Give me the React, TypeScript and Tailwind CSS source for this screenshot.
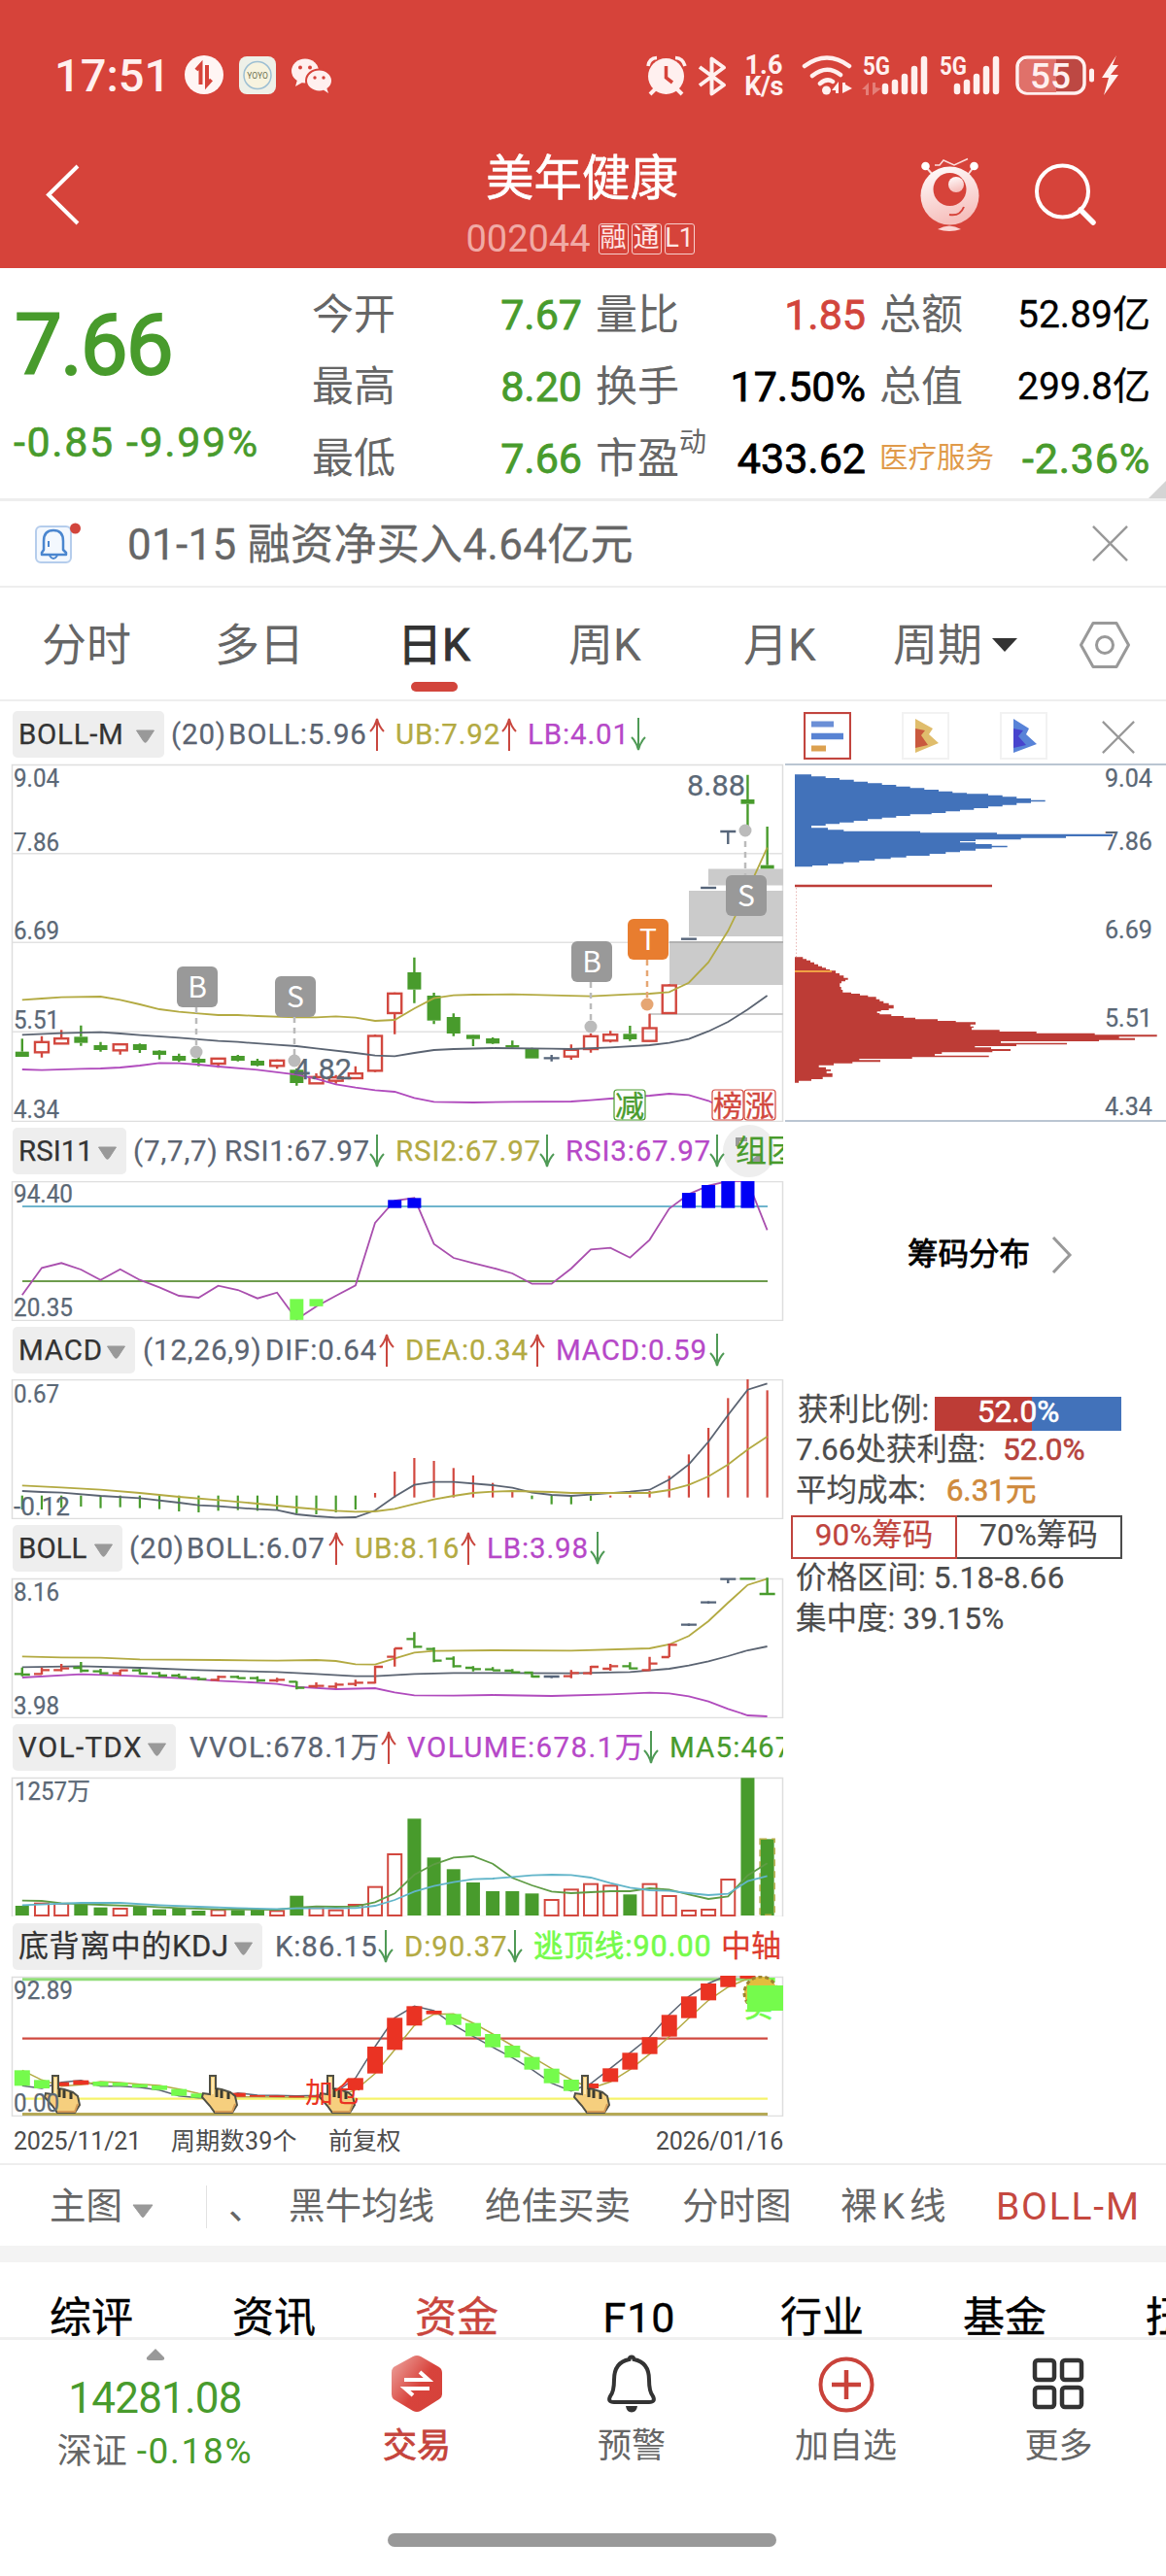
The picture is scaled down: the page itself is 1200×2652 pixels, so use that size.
import { clsx } from 'clsx';
import type { ReactNode } from 'react';

type Tone = 'g' | 'r' | 'k';
type Pt = [number, number];

const GREEN = '#489b2c';
const RED = '#d2483f';
const SLATE = '#5b6472';
const OLIVE = '#b3aa42';
const PURPLE = '#b04bbd';
const TONES: Record<Tone, string> = { g: GREEN, r: RED, k: '#56657a' };

// x of the n-th trading day
const dayX = (n: number) => 22.8 + n * 20.18;
// levels are stored in thirds of a pixel above a per-chart base
const level = (base: number) => (v: number) => base + v / 3;

const line = (pts: Pt[], y: (v: number) => number) =>
  pts.map(([n, v]) => `${dayX(n).toFixed(1)},${y(v).toFixed(1)}`).join(' ');

/* ---------- data ---------- */

const candles: [number, number, number, number, Tone][] = [
  [1048, 1088, 1104, 1104, 'g'], [1040, 1057, 1090, 1106, 'r'], [1021, 1046, 1063, 1063, 'r'],
  [1007, 1042, 1061, 1070, 'g'], [1058, 1068, 1083, 1088, 'g'], [1063, 1064, 1084, 1097, 'r'],
  [1063, 1065, 1083, 1092, 'g'], [1083, 1085, 1098, 1112, 'g'], [1094, 1101, 1116, 1120, 'g'],
  [1104, 1110, 1122, 1133, 'g'], [1107, 1108, 1125, 1138, 'r'], [1098, 1101, 1116, 1118, 'g'],
  [1110, 1116, 1131, 1133, 'g'], [1112, 1114, 1132, 1141, 'r'], [1140, 1144, 1185, 1193, 'g'],
  [1155, 1165, 1186, 1188, 'r'], [1160, 1166, 1178, 1187, 'r'], [1133, 1154, 1170, 1172, 'r'],
  [1035, 1038, 1147, 1151, 'r'], [905, 907, 969, 1034, 'r'], [797, 843, 896, 938, 'g'],
  [906, 915, 992, 1003, 'g'], [970, 981, 1032, 1040, 'g'], [1035, 1036, 1049, 1071, 'g'],
  [1044, 1047, 1063, 1065, 'g'], [1054, 1068, 1075, 1076, 'g'], [1076, 1077, 1109, 1109, 'g'],
  [1098, 1108, 1108, 1118, 'k'], [1066, 1081, 1103, 1113, 'r'], [1032, 1039, 1080, 1091, 'r'],
  [1024, 1034, 1054, 1060, 'r'], [1008, 1033, 1050, 1055, 'g'], [971, 1014, 1055, 1056, 'r'],
  [880, 882, 969, 970, 'r'], [740, 740, 740, 740, 'k'], [582, 582, 582, 582, 'k'],
  [408, 408, 408, 447, 'k'], [233, 309, 323, 410, 'g'], [393, 512, 523, 523, 'g'],
];

const mainUpper: Pt[] = [[0, 928], [1, 924], [2, 920], [4, 918], [5, 928], [6, 942], [7, 957], [8, 965], [9, 970], [10, 975], [11, 975], [12, 978], [14, 982], [15, 982], [16, 979], [17, 983], [18, 993], [19, 990], [20, 955], [21, 923], [22, 914], [23, 912], [25, 911], [27, 914], [29, 917], [31, 911], [32, 909], [33, 904], [34, 875], [35, 812], [36, 715], [37, 590], [38, 458]];
const mainMid: Pt[] = [[0, 1036], [2, 1031], [4, 1028], [5, 1032], [6, 1037], [8, 1045], [10, 1055], [11, 1058], [13, 1067], [14, 1071], [15, 1078], [17, 1092], [18, 1100], [19, 1102], [20, 1092], [21, 1083], [22, 1080], [24, 1077], [27, 1079], [28, 1080], [30, 1075], [32, 1068], [33, 1061], [34, 1049], [35, 1025], [36, 996], [37, 958], [38, 915]];
const mainLower: Pt[] = [[0, 1143], [1, 1145], [3, 1141], [4, 1140], [5, 1137], [6, 1131], [7, 1123], [8, 1124], [9, 1128], [10, 1134], [12, 1144], [14, 1159], [15, 1172], [16, 1189], [17, 1199], [18, 1207], [19, 1212], [20, 1231], [21, 1243], [23, 1245], [25, 1243], [28, 1242], [29, 1238], [30, 1233], [32, 1224], [33, 1218], [34, 1222], [35, 1240], [35.4, 1252]];

const rsi: Pt[] = [[0, 550], [1, 466], [2, 451], [3, 471], [4, 503], [5, 470], [6, 503], [7, 526], [8, 552], [9, 558], [10, 521], [11, 534], [12, 560], [13, 542], [14, 625], [15, 585], [16, 552], [17, 520], [18, 327], [19, 258], [20, 250], [21, 392], [22, 435], [23, 451], [24, 466], [25, 483], [26, 515], [27, 515], [28, 468], [29, 409], [30, 404], [31, 434], [32, 379], [33, 283], [34, 238], [35, 212], [36, 198], [37, 198], [38, 349]];
const rsiHot: Pt[] = [[19, 256], [20, 250], [34, 234], [35, 210], [36, 195], [37, 195]];

const dif: Pt[] = [[0, 1155], [1, 1158], [2, 1160], [4, 1170], [6, 1177], [8, 1191], [9, 1199], [10, 1202], [12, 1211], [13, 1214], [14, 1227], [15, 1233], [16, 1237], [17, 1236], [18, 1215], [19, 1172], [20, 1136], [21, 1127], [22, 1127], [24, 1137], [25, 1145], [26, 1160], [27, 1167], [28, 1170], [29, 1166], [31, 1157], [32, 1151], [33, 1120], [34, 1073], [35, 1003], [36, 920], [37, 842], [38, 823]];
const dea: Pt[] = [[0, 1138], [2, 1144], [4, 1151], [6, 1161], [8, 1173], [10, 1183], [12, 1194], [14, 1206], [16, 1216], [17, 1219], [18, 1218], [19, 1210], [20, 1195], [21, 1181], [22, 1170], [23, 1161], [24, 1157], [25, 1155], [27, 1158], [28, 1161], [30, 1161], [32, 1161], [33, 1152], [34, 1136], [35, 1110], [36, 1073], [37, 1027], [38, 987]];
const macdBars = [1212, 1212, 1207, 1203, 1208, 1205, 1208, 1211, 1218, 1221, 1216, 1214, 1216, 1212, 1224, 1227, 1221, 1212, 1161, 1095, 1053, 1062, 1084, 1107, 1130, 1152, 1180, 1196, 1196, 1185, 1169, 1168, 1155, 1108, 1042, 960, 868, 808, 844];

const bollUpper: Pt[] = [[0, 436], [2, 439], [4, 440], [6, 445], [10, 447], [13, 449], [15, 447], [16, 450], [17, 460], [18, 461], [19, 442], [20, 424], [21, 419], [24, 417], [28, 418], [32, 411], [33, 399], [34, 373], [35, 327], [36, 270], [37, 215], [38, 196]];
const bollMid: Pt[] = [[0, 469], [3, 466], [6, 471], [9, 478], [13, 484], [15, 490], [17, 497], [18, 497], [20, 490], [22, 487], [28, 488], [31, 484], [33, 474], [34, 464], [35, 451], [36, 435], [37, 417], [38, 405]];
const bollLower: Pt[] = [[0, 501], [3, 491], [6, 497], [8, 503], [10, 511], [12, 517], [13, 521], [14, 530], [16, 537], [18, 534], [19, 547], [20, 556], [22, 557], [24, 555], [27, 558], [30, 553], [32, 548], [33, 550], [34, 559], [35, 575], [36, 598], [37, 618], [38, 621]];
const ohlc: [number, number, number, number, Tone][] = [
  [470, 497, 490, 492, 'g'], [470, 492, 490, 478, 'r'], [459, 482, 478, 473, 'r'], [453, 485, 471, 480, 'g'],
  [474, 492, 482, 488, 'g'], [477, 495, 488, 479, 'r'], [474, 491, 479, 489, 'g'], [484, 500, 488, 495, 'g'],
  [489, 502, 495, 500, 'g'], [498, 510, 502, 506, 'g'], [495, 513, 508, 499, 'r'], [495, 505, 499, 503, 'g'],
  [497, 515, 503, 510, 'g'], [502, 515, 510, 508, 'r'], [512, 538, 514, 533, 'g'], [516, 533, 528, 527, 'r'],
  [517, 535, 529, 523, 'r'], [508, 528, 521, 517, 'r'], [465, 520, 517, 468, 'r'], [410, 467, 437, 411, 'r'],
  [361, 410, 382, 406, 'g'], [408, 454, 413, 449, 'g'], [436, 470, 443, 466, 'g'], [466, 482, 471, 475, 'g'],
  [469, 480, 476, 479, 'g'], [475, 488, 480, 485, 'g'], [482, 501, 486, 498, 'g'], [494, 503, 498, 498, 'k'],
  [478, 503, 497, 487, 'r'], [465, 493, 488, 468, 'r'], [459, 480, 474, 466, 'r'], [454, 476, 466, 473, 'g'],
  [437, 481, 478, 458, 'r'], [396, 438, 438, 400, 'r'], [334, 342, 338, 338, 'k'], [265, 273, 269, 269, 'k'],
  [194, 210, 197, 197, 'k'], [194, 198, 196, 196, 'g'], [193, 247, 243, 243, 'g'],
];

const volume: [number, Tone][] = [
  [1206, 'g'], [1199, 'r'], [1200, 'r'], [1199, 'g'], [1211, 'g'], [1215, 'r'], [1207, 'g'], [1217, 'g'], [1214, 'g'],
  [1221, 'g'], [1219, 'r'], [1219, 'g'], [1218, 'g'], [1222, 'r'], [1175, 'g'], [1213, 'r'], [1220, 'r'], [1203, 'r'],
  [1148, 'r'], [1047, 'r'], [937, 'g'], [1057, 'g'], [1093, 'g'], [1134, 'g'], [1161, 'g'], [1161, 'g'], [1168, 'g'],
  [1188, 'r'], [1156, 'r'], [1139, 'r'], [1144, 'r'], [1171, 'g'], [1139, 'r'], [1176, 'r'], [1221, 'r'], [1218, 'r'],
  [1125, 'r'], [811, 'g'], [1000, 'g'],
];
const ma5: Pt[] = [[0, 1190], [1, 1191], [2, 1198], [4, 1203], [6, 1207], [8, 1213], [10, 1217], [13, 1218], [14, 1212], [15, 1208], [16, 1209], [17, 1208], [18, 1195], [19, 1168], [20, 1110], [21, 1078], [22, 1057], [23, 1053], [24, 1076], [25, 1120], [26, 1143], [27, 1162], [28, 1167], [29, 1164], [30, 1161], [31, 1161], [32, 1152], [33, 1156], [34, 1171], [35, 1185], [36, 1177], [37, 1112], [38, 1075]];
const ma10: Pt[] = [[0, 1204], [3, 1197], [5, 1197], [7, 1204], [9, 1209], [11, 1213], [13, 1216], [14, 1214], [17, 1213], [18, 1206], [19, 1188], [20, 1162], [21, 1145], [22, 1133], [23, 1124], [24, 1122], [25, 1117], [26, 1112], [27, 1110], [28, 1111], [29, 1119], [30, 1136], [31, 1150], [32, 1158], [33, 1160], [34, 1167], [35, 1173], [36, 1169], [37, 1130], [38, 1114]];

const kdj: [number, number, number, 'r' | 'g'][] = [
  [0, 484, 532, 'g'], [1, 514, 540, 'g'], [2, 521, 533, 'r'], [3, 515, 529, 'r'], [4, 519, 533, 'g'], [5, 522, 533, 'g'],
  [6, 527, 537, 'g'], [7, 531, 545, 'g'], [8, 542, 563, 'g'], [9, 556, 569, 'g'], [10, 562, 570, 'g'], [11, 554, 566, 'r'],
  [12, 561, 566, 'r'], [13, 562, 567, 'r'], [14, 563, 568, 'r'], [15, 562, 567, 'r'], [16, 552, 566, 'r'], [17, 508, 545, 'r'],
  [18, 411, 494, 'r'], [19, 322, 421, 'r'], [20, 286, 346, 'r'], [21, 300, 311, 'r'], [22, 310, 344, 'g'], [23, 338, 379, 'g'],
  [24, 372, 413, 'g'], [25, 408, 445, 'g'], [26, 443, 482, 'g'], [27, 479, 524, 'g'], [28, 513, 548, 'g'], [29, 525, 540, 'r'],
  [30, 478, 520, 'r'], [31, 430, 482, 'r'], [32, 382, 434, 'r'], [33, 313, 380, 'r'], [34, 256, 323, 'r'], [35, 216, 268, 'r'],
  [36, 190, 227, 'r'], [37, 191, 201, 'r'], [38, 198, 212, 'g'],
];

// chip histogram: [reach, lower edge]
const chipsHigh: Pt[] = [[135, 238], [179, 243], [222, 248], [266, 254], [309, 259], [353, 264], [397, 269], [440, 274], [484, 279], [528, 284], [571, 289], [615, 292], [681, 296], [725, 301], [769, 306], [813, 311], [857, 316], [813, 320], [769, 326], [725, 331], [681, 336], [637, 341], [594, 346], [550, 351], [506, 355], [440, 360], [397, 365], [353, 370], [309, 375], [266, 380], [222, 385], [179, 390], [135, 397], [186, 403], [235, 407], [471, 412], [708, 416], [1065, 423], [921, 428], [782, 433], [642, 438], [594, 442], [642, 447], [692, 452], [740, 457], [692, 461], [642, 467], [594, 472], [550, 477], [500, 483], [428, 488], [380, 493], [331, 498], [283, 503], [235, 508], [186, 513], [138, 517]];
const chipsLow: Pt[] = [[109, 802], [120, 806], [132, 812], [144, 818], [156, 824], [168, 829], [180, 834], [192, 838], [210, 846], [222, 853], [235, 860], [248, 866], [240, 871], [228, 877], [223, 888], [227, 897], [232, 905], [258, 909], [285, 914], [310, 919], [335, 926], [346, 932], [358, 938], [374, 944], [389, 955], [374, 960], [350, 964], [338, 969], [346, 973], [382, 978], [420, 983], [456, 988], [525, 993], [581, 997], [642, 1004], [626, 1010], [636, 1014], [630, 1021], [716, 1026], [830, 1031], [1010, 1036], [1202, 1042], [1085, 1046], [1134, 1052], [1023, 1056], [720, 1061], [924, 1066], [768, 1071], [640, 1075], [690, 1080], [750, 1086], [694, 1090], [538, 1095], [516, 1100], [683, 1105], [446, 1110], [283, 1114], [348, 1120], [262, 1124], [204, 1130], [158, 1136], [180, 1143], [195, 1148], [182, 1155], [200, 1166], [170, 1173], [135, 1178], [96, 1184]];

const stepPath = (start: number, rows: Pt[]) =>
  `M818 ${720 + start / 3}` +
  rows.map(([x, y]) => `H${(790 + x / 3).toFixed(1)}V${(720 + y / 3).toFixed(1)}`).join('') +
  'H818Z';

/* ---------- small pieces ---------- */

function Arrow({ dir }: { dir: 'up' | 'down' }) {
  return (
    <svg className="mr-[11px] h-9 w-4 shrink-0" viewBox="0 0 16 36" fill="none" strokeWidth="2">
      {dir === 'up' ? (
        <path d="M8 35V2M1 15Q6 10 8 2Q10 10 15 15" stroke="#c9473f" />
      ) : (
        <path d="M8 1V34M1 21Q6 26 8 34Q10 26 15 21" stroke="#4f9a56" />
      )}
    </svg>
  );
}

interface Segment {
  text: string;
  className: string;
  dir?: 'up' | 'down';
}

function PanelHead({ name, chip, segments, className, children }: {
  name: string;
  chip: string;
  segments: Segment[];
  className: string;
  children?: ReactNode;
}) {
  return (
    <div className={clsx('relative w-[806px] overflow-hidden pl-[13px]', className)}>
      <div className="flex h-12 items-center text-[29.5px] whitespace-nowrap [-webkit-text-stroke:0.25px]">
        <div className={clsx('flex h-12 shrink-0 items-center rounded-[5px] bg-[#eeeeee] pl-[6px] text-[#333]', chip)}>
          <span>{name}</span>
          <svg className="mt-1 ml-auto mr-[9px] h-[14px] w-[21px] shrink-0" viewBox="0 0 21 14">
            <path d="M1.500 1H19.500L12 12.500Q10.500 14 9 12.500Z" fill="#999" stroke="#999" strokeLinejoin="round" />
          </svg>
        </div>
        {children}
        {segments.map((s) => (
          <div key={s.text} className="relative flex shrink-0 items-center">
            <span className={clsx('shrink-0', s.className)}>{s.text}</span>
            {s.dir && <Arrow dir={s.dir} />}
          </div>
        ))}
      </div>
    </div>
  );
}

function Frame({ top, height = 144 }: { top: number; height?: number }) {
  return <rect x="12.5" y={top + 0.5} width="793" height={height} fill="none" stroke="#dedede" strokeWidth="1.5" />;
}

function AxisLabel({ x = 14, y, w = 47, size = 25, children }: { x?: number; y: number; w?: number; size?: number; children: string }) {
  return (
    <text x={x} y={y} fontSize={size} fill="#5b6876" stroke="#5b6876" strokeWidth="0.25" textLength={w} lengthAdjust="spacingAndGlyphs">
      {children}
    </text>
  );
}

function Flag({ x, y, dot, letter, color = '#999999', dotColor = '#bbbbbb', up }: {
  x: number; y: number; dot: number; letter: string; color?: string; dotColor?: string; up?: boolean;
}) {
  return (
    <g>
      <path d={up ? `M${x} ${dot}V${y}` : `M${x} ${y + 42}V${dot}`} stroke={dotColor} strokeWidth="2.5" strokeDasharray="6 5" />
      <circle cx={x} cy={dot} r="6.5" fill={dotColor} />
      <rect x={x - 20} y={y} width="42" height="42" rx="6" fill={color} />
      <text x={x + 1} y={y + 32} fontSize="30" fill="#fff" textAnchor="middle" className="font-['Noto_Sans_CJK_SC',sans-serif]">
        {letter}
      </text>
    </g>
  );
}

function Stamp({ x, color, children }: { x: number; color: string; children: string }) {
  return (
    <g>
      <rect x={x} y="1122" width="32" height="31" rx="3" fill="#fff" stroke={color} strokeWidth="1.2" />
      <text x={x + 16} y="1148.5" fontSize="30" fill={color} stroke={color} strokeWidth="0.4" textAnchor="middle">
        {children}
      </text>
    </g>
  );
}

function Hand({ x }: { x: number }) {
  return (
    <g transform={`translate(${x} 2136)`}>
      <path d="M8 1H14V14L20 15L29 18L34 22L36 31L31 39H13L8 32L0 23L1 19L8 20Z" fill="#f6cf7e" stroke="#4f4f45" strokeWidth="2" />
      <path d="M15 14V23M20 16V24M27 18V25" stroke="#3b3b30" strokeWidth="3" />
      <path d="M11 3V20" stroke="#ffe9b0" strokeWidth="2" />
      <path d="M13 38L31 38L34 30" stroke="#d49a55" strokeWidth="2" fill="none" />
    </g>
  );
}

/* ---------- header ---------- */

function StatusBar() {
  return (
    <div className="flex h-[114px] items-start pt-[56px] text-[#fff0ef]">
      <div className="ml-[56px] h-[42px] w-[133px] text-[47px] leading-[43px] font-medium">17:51</div>
      <svg className="h-[42px] w-[156px]" viewBox="189 56 156 42">
        <circle cx="210" cy="77" r="20" fill="#fff5f4" />
        <path d="M206.500 87V67L202 72M213 67V87L217.500 82" fill="none" stroke="#d6433a" strokeWidth="4" />
        <rect x="246" y="58" width="38" height="39" rx="8" fill="#eef0e8" />
        <circle cx="265" cy="77.5" r="14" fill="#f7f3df" stroke="#9dbfd3" strokeWidth="1.5" />
        <text x="265" y="81" fontSize="8.5" textAnchor="middle" fill="#6d7050">YOYO</text>
        <ellipse cx="314" cy="73" rx="14" ry="12.5" fill="#fff0ef" />
        <path d="M306 82L304 89L311 85Z" fill="#fff0ef" />
        <ellipse cx="328.5" cy="83" rx="13.5" ry="11.5" fill="#fff0ef" stroke="#d6433a" strokeWidth="2" />
        <path d="M332 92L338 96L336 90Z" fill="#fff0ef" />
        <g fill="#d6433a">
          <circle cx="309" cy="69.5" r="2" />
          <circle cx="319" cy="69.5" r="2" />
          <circle cx="324" cy="80" r="1.7" />
          <circle cx="333" cy="80" r="1.7" />
        </g>
      </svg>
      <svg className="ml-[315px] h-[44px] w-[90px]" viewBox="660 55 90 44" fill="none" stroke="#fff0ef">
        <circle cx="685.5" cy="77.5" r="18.5" fill="#fff0ef" stroke="none" />
        <path d="M685.500 67V79L692 84" stroke="#d6433a" strokeWidth="3.5" />
        <path d="M667 67Q668 59 676 58.500M705 67Q703 59 695 58.500" strokeWidth="3.5" />
        <path d="M674 91L669 96M697 91L702 96" strokeWidth="4" />
        <path d="M720 68L745 86.500L732.500 95.500V59.500L745 68.500L720 87" strokeWidth="4" strokeLinejoin="round" />
      </svg>
      <div className="ml-[14px] w-[44px] text-center text-[27px] leading-[22px] font-bold">
        <div>1.6</div>
        <div className="tracking-[-0.5px]">K/s</div>
      </div>
      <svg className="ml-[12px] h-[44px] w-[336px]" viewBox="820 55 336 44" fill="none" stroke="#fff0ef" strokeLinecap="round">
        <path d="M828 67Q851 50 874 67M836 77Q851 65 865 76M844 85Q851 79 857 83" strokeWidth="4.5" />
        <circle cx="850.5" cy="92" r="4.5" fill="#fff0ef" stroke="none" />
        <path d="M856 92L863 83V95H860V92ZM867 84V95L877 90L870 86V84Z" fill="#fff0ef" stroke="none" />
        <g opacity=".35" fill="#fff0ef" stroke="none">
          <path d="M887 91L894 84V97H891V91ZM898 84V97L907 90L901 89V84Z" />
        </g>
        <path d="M911 93V88M921 93V84M931 93V78M941 93V70M951 93V60" strokeWidth="6.5" />
        <path d="M985 93V88M995 93V84M1005 93V78M1015 93V70M1025 93V60" strokeWidth="6.5" />
        <g fill="#fff0ef" stroke="none" fontSize="26" fontWeight="700">
          <text x="888" y="76" textLength="28" lengthAdjust="spacingAndGlyphs">5G</text>
          <text x="967" y="76" textLength="28" lengthAdjust="spacingAndGlyphs">5G</text>
        </g>
        <rect x="1047" y="58" width="69" height="37" rx="10" fill="#bd4843" strokeWidth="3.5" />
        <path d="M1057 60H1087V94H1057Q1049 93 1049 85V68Q1049 61 1057 60Z" fill="#e0716a" stroke="none" />
        <path d="M1123.500 72V81" strokeWidth="5" />
        <path d="M1149 56L1134 79H1141L1136 97L1151 76H1143L1151 66H1145Z" fill="#fff0ef" stroke="none" />
        <text x="1081" y="90" fontSize="37" fontWeight="500" textAnchor="middle" fill="#fff0ef" stroke="none">55</text>
      </svg>
    </div>
  );
}

function TitleBar() {
  return (
    <div className="flex h-[162px] text-white">
      <svg className="mt-[52px] ml-[44px] h-[68px] w-[40px]" viewBox="44 166 40 68" fill="none" stroke="#fff" strokeWidth="4">
        <path d="M80 171L50 200.500L80 230" />
      </svg>
      <div className="ml-[385px] w-[260px] pt-[39px] text-center">
        <div className="text-[49.5px] leading-[62px] [-webkit-text-stroke:0.6px]">美年健康</div>
        <div className="mt-[12px] flex h-[37px] items-center justify-center gap-[3px] text-[27px] leading-none text-[#ffe5e3]">
          <span className="mr-[5px] -ml-1 text-[38px] text-[#f0aaa5]">002044</span>
          {['融', '通', 'L1'].map((tag) => (
            <span key={tag} className="flex h-[32px] w-[31px] items-center justify-center rounded-[3px] border border-[#f7cfcc]">
              {tag}
            </span>
          ))}
        </div>
      </div>
      <svg className="mt-[46px] ml-[211px] h-[80px] w-[200px]" viewBox="940 160 200 80" fill="none">
        <defs>
          <linearGradient id="bot" x1="0" y1="0" x2=".3" y2="1">
            <stop offset="0" stopColor="#fff" />
            <stop offset="1" stopColor="#f6c0bd" />
          </linearGradient>
        </defs>
        <path d="M953 172L960 180M1002 172L996 180" stroke="#fbdedc" strokeWidth="2" />
        <circle cx="952.5" cy="171" r="4.3" fill="#fff" />
        <circle cx="1002.5" cy="171" r="4.3" fill="#fff" />
        <path d="M962 170H967L971 165L982 170L996 163.500" stroke="#fbdedc" strokeWidth="1.5" />
        <circle cx="977.5" cy="201.5" r="30" fill="url(#bot)" />
        <circle cx="977.5" cy="195" r="17" fill="#d6433a" />
        <circle cx="984" cy="190" r="8" fill="url(#bot)" />
        <path d="M977 221Q988 223 992 213" stroke="#d6433a" strokeWidth="2" />
        <path d="M965 236Q977 229 989 236Q977 240 965 236Z" fill="#fbd5d3" />
        <circle cx="1093.5" cy="197" r="26.5" stroke="#fff" strokeWidth="4" />
        <path d="M1112 216L1125 229" stroke="#fff" strokeWidth="5.5" strokeLinecap="round" />
      </svg>
    </div>
  );
}

function Quote() {
  const label = 'text-[43px] text-[#666]';
  return (
    <div className="relative flex h-[240px] border-b-[3px] border-[#eeeeee]">
      <div className="w-[321px] pl-[15px] text-[#489b2c]">
        <div className="mt-[32px] text-[87px] leading-[94px] tracking-[-2px] [-webkit-text-stroke:2px]">7.66</div>
        <div className="mt-[27px] -ml-px text-[43px] leading-[52px] tracking-[1.6px] [-webkit-text-stroke:0.6px]">-0.85 -9.99%</div>
      </div>
      <div className="grid h-[223px] grid-cols-[102px_176px_112px_180px_126px_167px] grid-rows-[74px_74px_74px] items-center pt-[11px] text-right text-[43px] leading-none whitespace-nowrap text-black [-webkit-text-stroke:0.8px] [&>*:nth-child(odd)]:text-left [&>*:nth-child(odd)]:[-webkit-text-stroke:0]">
        <span className={label}>今开</span>
        <span className="text-[#489b2c]">7.67</span>
        <span className={clsx(label, 'pl-[14px]')}>量比</span>
        <span className="text-[#d2453c]">1.85</span>
        <span className={clsx(label, 'pl-[14px]')}>总额</span>
        <span className="text-[39px] [-webkit-text-stroke:0.3px]">52.89亿</span>
        <span className={label}>最高</span>
        <span className="text-[#489b2c]">8.20</span>
        <span className={clsx(label, 'pl-[14px]')}>换手</span>
        <span>17.50%</span>
        <span className={clsx(label, 'pl-[14px]')}>总值</span>
        <span className="text-[39px] [-webkit-text-stroke:0.3px]">299.8亿</span>
        <span className={label}>最低</span>
        <span className="text-[#489b2c]">7.66</span>
        <span className={clsx(label, 'relative pl-[14px]')}>
          市盈<sup className="absolute top-[-9px] text-[28px] leading-none">动</sup>
        </span>
        <span>433.62</span>
        <span className="pl-[14px] text-[29.5px] text-[#e09a4a]">医疗服务</span>
        <span className="tracking-[0.8px] text-[#489b2c]">-2.36%</span>
      </div>
      <svg className="absolute right-0 bottom-0 h-[18px] w-[18px]" viewBox="0 0 18 18">
        <path d="M18 0V18H0Z" fill="#d4d4d4" />
      </svg>
    </div>
  );
}

function Cross({ className }: { className: string }) {
  return (
    <svg className={className} viewBox="0 0 38 38" stroke="#999" strokeWidth="2.5">
      <path d="M1 1L37 37M37 1L1 37" />
    </svg>
  );
}

function Notice() {
  return (
    <div className="flex h-[89px] items-center border-b-2 border-[#eeeeee]">
      <svg className="ml-[34px] h-[48px] w-[50px]" viewBox="34 535 50 48" fill="none">
        <rect x="37" y="541" width="36" height="37" rx="5" fill="#f3f8fe" stroke="#b5cdec" strokeWidth="2" />
        <path d="M43 570V568L45 565V556Q45 545 55 545Q65 545 65 556V565L68 568V570Z" stroke="#4a86cf" strokeWidth="2.5" strokeLinejoin="round" />
        <path d="M51 571Q55 577 59 571M50 556V562" stroke="#4a86cf" strokeWidth="2" />
        <circle cx="77.5" cy="543" r="5.5" fill="#d2453c" />
      </svg>
      <div className="mt-[3px] ml-[47px] flex-1 text-[44px] leading-none tracking-[0.3px] text-[#666] [-webkit-text-stroke:0.3px]">
        01-15 融资净买入4.64亿元
      </div>
      <Cross className="mr-[39px] h-[37px] w-[37px]" />
    </div>
  );
}

const periods = [
  { name: '分时', w: 'w-[178px]' },
  { name: '多日', w: 'w-[188px]' },
  { name: '日K', w: 'w-[176px]', active: true },
  { name: '周K', w: 'w-[180px]' },
  { name: '月K', w: 'w-[154px]' },
];

function PeriodTabs() {
  return (
    <div className="flex h-[117px] items-center border-b-2 border-[#eeeeee] pt-[3px] pl-[43px] text-[46px] leading-none text-[#666]">
      {periods.map((p) => (
        <div key={p.name} className={clsx('relative', p.w, p.active && 'text-[#333] [-webkit-text-stroke:1px]')}>
          {p.name}
          {p.active && <i className="absolute top-[61px] left-[14px] h-[10px] w-[48px] rounded-full bg-[#d2453c]" />}
        </div>
      ))}
      <div className="flex w-[191px] items-center">
        周期
        <svg className="ml-[10px] h-[15px] w-[26px]" viewBox="0 0 26 15">
          <path d="M0 0H26L13 14Z" fill="#333" />
        </svg>
      </div>
      <svg className="h-[50px] w-[54px]" viewBox="0 0 54 50" fill="none" stroke="#999" strokeWidth="3">
        <path d="M15 2.500H39L51.500 25L39 47.500H15L2.500 25Z" strokeLinejoin="round" />
        <circle cx="27" cy="25" r="8.5" />
      </svg>
    </div>
  );
}

/* ---------- charts ---------- */

function MainChart() {
  const y = level(720);
  return (
    <svg className="block h-[369px] w-[808px]" viewBox="0 786 808 369" fill="none">
      <Frame top={787} height={367} />
      <path d="M13 878.700H806M13 970.300H806M13 1062.300H806" stroke="#e2e2e2" strokeWidth="1.5" />
      <path d="M668 1044H806" stroke="#cccccc" strokeWidth="2" />
      <g fill="#cbcbcb">
        <rect x="729" y="894.5" width="77" height="17" />
        <rect x="709" y="917" width="97" height="47" />
        <rect x="689" y="969" width="117" height="45" />
      </g>
      <path d="M689 970H806" stroke="#a9a9a9" strokeWidth="1.5" />
      {candles.map(([hi, top, bottom, lo, tone], i) => {
        const x = dayX(i);
        const c = TONES[tone];
        if (tone === 'k') {
          return <path key={i} d={`M${x - 8} ${y(top)}H${x + 8}M${x} ${y(hi)}V${y(lo)}`} stroke={c} strokeWidth="2.4" />;
        }
        return (
          <g key={i} stroke={c} strokeWidth="2.4">
            <path d={`M${x} ${y(hi)}V${y(top)}M${x} ${y(bottom)}V${y(lo)}`} />
            {tone === 'g' ? (
              <rect x={x - 7} y={y(top)} width="14" height={y(bottom) - y(top)} fill={c} stroke="none" />
            ) : (
              <rect x={x - 7} y={y(top) + 0.5} width="14" height={y(bottom) - y(top) - 0.5} />
            )}
          </g>
        );
      })}
      <polyline points={line(mainMid, y)} stroke={SLATE} strokeWidth="1.8" />
      <polyline points={line(mainUpper, y)} stroke={OLIVE} strokeWidth="1.8" />
      <polyline points={line(mainLower, y)} stroke={PURPLE} strokeWidth="1.8" />
      <Flag x={202} y={995} dot={1083} letter="B" />
      <Flag x={303} y={1005} dot={1092} letter="S" />
      <Flag x={608} y={969} dot={1057} letter="B" />
      <Flag x={666} y={946} dot={1034} letter="T" color="#e87d2f" dotColor="#e6a673" />
      <Flag x={767} y={901} dot={855} letter="S" up />
      <Stamp x={632} color={GREEN}>减</Stamp>
      <Stamp x={733} color={RED}>榜</Stamp>
      <Stamp x={766} color={RED}>涨</Stamp>
      <AxisLabel y={810}>9.04</AxisLabel>
      <AxisLabel y={876}>7.86</AxisLabel>
      <AxisLabel y={967}>6.69</AxisLabel>
      <AxisLabel y={1059}>5.51</AxisLabel>
      <AxisLabel y={1151}>4.34</AxisLabel>
      <AxisLabel x={707} y={819} w={60} size={30}>8.88</AxisLabel>
      <AxisLabel x={302} y={1111} w={60} size={30}>4.82</AxisLabel>
    </svg>
  );
}

function RsiChart() {
  const y = level(1150);
  return (
    <svg className="block h-[144px] w-[808px]" viewBox="0 1216 808 144" fill="none">
      <Frame top={1216} height={143} />
      <path d="M23 1242H790" stroke="#6fb4cd" strokeWidth="1.8" />
      <path d="M23 1319H790" stroke="#6d9c4d" strokeWidth="1.8" />
      <polyline points={line(rsi, y)} stroke="#a94fae" strokeWidth="1.8" />
      {rsiHot.map(([n, v]) => (
        <rect key={n} x={dayX(n) - 7} y={y(v)} width="14" height={y(281) - y(v)} fill="#0000f5" />
      ))}
      <rect x={dayX(14) - 7} y={y(562)} width="14" height="21.5" fill="#75fb4c" />
      <rect x={dayX(15) - 7} y={y(562)} width="14" height="7.5" fill="#75fb4c" />
      <AxisLabel y={1238} w={61}>94.40</AxisLabel>
      <AxisLabel y={1355} w={61}>20.35</AxisLabel>
    </svg>
  );
}

function MacdChart() {
  const y = level(1150);
  return (
    <svg className="block h-[144px] w-[808px]" viewBox="0 1420 808 144" fill="none">
      <Frame top={1420} height={143} />
      {macdBars.map((v, i) => {
        const down = v > 1175;
        return (
          <path key={i} d={`M${dayX(i)} ${y(down ? 1169 : v)}V${y(down ? v : 1175)}`} stroke={down ? GREEN : RED} strokeWidth="2.2" />
        );
      })}
      <polyline points={line(dif, y)} stroke={SLATE} strokeWidth="1.8" />
      <polyline points={line(dea, y)} stroke={OLIVE} strokeWidth="1.8" />
      <AxisLabel y={1444}>0.67</AxisLabel>
      <AxisLabel y={1560} w={58}>-0.12</AxisLabel>
    </svg>
  );
}

function BollChart() {
  const y = level(1560);
  return (
    <svg className="block h-[145px] w-[808px]" viewBox="0 1624 808 145" fill="none">
      <Frame top={1625} height={143} />
      <polyline points={line(bollUpper, y)} stroke={OLIVE} strokeWidth="1.8" />
      <polyline points={line(bollMid, y)} stroke={SLATE} strokeWidth="1.8" />
      <polyline points={line(bollLower, y)} stroke={PURPLE} strokeWidth="1.8" />
      {ohlc.map(([hi, lo, open, close, tone], i) => (
        <path
          key={i}
          d={`M${dayX(i)} ${y(hi)}V${y(lo)}M${dayX(i) - 8} ${y(open)}H${dayX(i)}M${dayX(i)} ${y(close)}H${dayX(i) + 8}`}
          stroke={TONES[tone]}
          strokeWidth="2.4"
        />
      ))}
      <AxisLabel y={1648}>8.16</AxisLabel>
      <AxisLabel y={1765}>3.98</AxisLabel>
    </svg>
  );
}

function VolumeChart() {
  const y = level(1560);
  return (
    <svg className="block h-[144px] w-[808px]" viewBox="0 1829 808 144" fill="none">
      <Frame top={1830} height={143} />
      {volume.map(([v, tone], i) =>
        tone === 'g' ? (
          <rect key={i} x={dayX(i) - 7} y={y(v)} width="14" height={y(1236) - y(v)} fill={GREEN} />
        ) : (
          <rect key={i} x={dayX(i) - 7} y={y(v)} width="14" height={y(1236) - y(v)} stroke={RED} strokeWidth="2" />
        ),
      )}
      <rect x={dayX(38) - 7.5} y={y(1000)} width="15" height="78" stroke="#b3aa42" strokeWidth="1.5" strokeDasharray="7 5" />
      <polyline points={line(ma5, y)} stroke="#5f9c45" strokeWidth="1.8" />
      <polyline points={line(ma10, y)} stroke="#62b5c9" strokeWidth="1.8" />
      <AxisLabel x={15} y={1853} w={78}>1257万</AxisLabel>
    </svg>
  );
}

function KdjChart() {
  const y = level(1970);
  const fast: Pt[] = kdj.map(([n, a, b, c]) => [n, c === 'r' ? a : b]);
  const slow: Pt[] = kdj.map(([n, a, b, c]) => [n, c === 'r' ? b : a]);
  return (
    <svg className="block h-[145px] w-[808px]" viewBox="0 2034 808 145" fill="none">
      <Frame top={2035} height={143} />
      <path d="M23 2037.700H790" stroke="#90dd78" strokeWidth="3" />
      <path d="M23 2098.700H790" stroke="#d04a40" strokeWidth="2.2" />
      <path d="M23 2160.700H790" stroke="#f6f36b" strokeWidth="2.2" />
      <path d="M23 2176.500H790" stroke="#b5a957" strokeWidth="3" />
      <polyline points={line(fast, y)} stroke={SLATE} strokeWidth="1.5" />
      <polyline points={line(slow, y)} stroke={OLIVE} strokeWidth="1.5" />
      {kdj.map(([n, a, b, c]) => (
        <rect key={n} x={dayX(n) - 8} y={y(a)} width="16" height={y(b) - y(a)} fill={c === 'r' ? '#ea3323' : '#75fb4c'} />
      ))}
      {[46, 208, 329, 591].map((x) => <Hand key={x} x={x} />)}
      <text x="314" y="2165" fontSize="29" fill="#ea3323">加仓</text>
      <circle cx="783" cy="2052" r="17" fill="#e2bd3d" stroke="#9c8230" strokeWidth="3" strokeDasharray="4 3" />
      <text x="766" y="2077" fontSize="29" fill="#75fb4c" stroke="#75fb4c" strokeWidth="0.6">卖</text>
      <rect x="769" y="2044" width="37" height="26" fill="#75fb4c" />
      <AxisLabel y={2058} w={61}>92.89</AxisLabel>
      <AxisLabel y={2174}>0.00</AxisLabel>
    </svg>
  );
}

const grey = 'text-[#5b6472] tracking-[0.85px]';
const olive = 'text-[#b3aa42] tracking-[0.85px]';
const violet = 'text-[#b648c8] tracking-[0.85px]';

function Charts() {
  return (
    <div className="h-[1505px] w-[808px]">
      <PanelHead
        name="BOLL-M"
        chip="w-[156px] mr-[7px] tracking-[0.7px]"
        className="h-[64px] pt-[10px]"
        segments={[
          { text: '(20)', className: clsx(grey, 'w-[59px]') },
          { text: 'BOLL:5.96', className: clsx(grey, 'w-[145px]'), dir: 'up' },
          { text: 'UB:7.92', className: clsx(olive, 'w-[109px]'), dir: 'up' },
          { text: 'LB:4.01', className: clsx(violet, 'w-[106px]'), dir: 'down' },
        ]}
      />
      <MainChart />
      <PanelHead
        name="RSI11"
        chip="w-[117px] mr-[7px]"
        className="h-[61px] pt-[6px]"
        segments={[
          { text: '(7,7,7)', className: clsx(grey, 'w-[94px]') },
          { text: 'RSI1:67.97', className: clsx(grey, 'w-[149px]'), dir: 'down' },
          { text: 'RSI2:67.97', className: clsx(olive, 'w-[148px]'), dir: 'down' },
          { text: 'RSI3:67.97', className: clsx(violet, 'w-[148px]'), dir: 'down' },
          { text: '组团', className: 'text-[#489b2c] text-[32px]' },
        ]}
      >
        {/* floating drag handle, half hidden by the last value */}
        <svg className="absolute top-[3px] left-[744px] h-[54px] w-[54px]" viewBox="0 0 54 54">
          <circle cx="27" cy="27" r="27" fill="#eeeeee" />
          <path d="M15 22V15H25M30 38H38V32Z" fill="none" stroke="#999" strokeWidth="4" />
        </svg>
      </PanelHead>
      <RsiChart />
      <PanelHead
        name="MACD"
        chip="w-[126px] mr-[8px] tracking-[0.8px]"
        className="h-[60px] pt-[6px]"
        segments={[
          { text: '(12,26,9)', className: clsx(grey, 'w-[126px]') },
          { text: 'DIF:0.64', className: clsx(grey, 'w-[117px]'), dir: 'up' },
          { text: 'DEA:0.34', className: clsx(olive, 'w-[128px]'), dir: 'up' },
          { text: 'MACD:0.59', className: clsx(violet, 'w-[158px]'), dir: 'down' },
        ]}
      />
      <MacdChart />
      <PanelHead
        name="BOLL"
        chip="w-[113px] mr-[7px]"
        className="h-[60px] pt-[6px]"
        segments={[
          { text: '(20)', className: clsx(grey, 'w-[59px]') },
          { text: 'BOLL:6.07', className: clsx(grey, 'w-[146px]'), dir: 'up' },
          { text: 'UB:8.16', className: clsx(olive, 'w-[109px]'), dir: 'up' },
          { text: 'LB:3.98', className: clsx(violet, 'w-[106px]'), dir: 'down' },
        ]}
      />
      <BollChart />
      <PanelHead
        name="VOL-TDX"
        chip="w-[168px] mr-[14px] tracking-[1.4px]"
        className="h-[60px] pt-[6px]"
        segments={[
          { text: 'VVOL:678.1万', className: 'w-[197px] text-[#5b6472] tracking-[1.1px]', dir: 'up' },
          { text: 'VOLUME:678.1万', className: 'w-[243px] text-[#b648c8] tracking-[1.4px]', dir: 'down' },
          { text: 'MA5:467.2万', className: 'text-[#489b2c] tracking-[1.1px]' },
        ]}
      />
      <VolumeChart />
      <PanelHead
        name="底背离中的KDJ"
        chip="w-[257px] mr-[13px] text-[31px] tracking-[0.6px]"
        className="h-[61px] pt-[7px]"
        segments={[
          { text: 'K:86.15', className: clsx(grey, 'w-[106px]'), dir: 'down' },
          { text: 'D:90.37', className: clsx(olive, 'w-[106px]'), dir: 'down' },
          { text: '逃顶线:90.00', className: 'w-[193px] text-[30.5px] text-[#75fb4c] tracking-[0.9px] [-webkit-text-stroke:0.6px]' },
          { text: '中轴', className: 'text-[#dd3a2c] text-[31px]' },
        ]}
      />
      <KdjChart />
      <div className="flex h-[48px] w-[806px] items-center pt-[3px] pl-[14px] text-[25px] leading-none tracking-[-0.2px] text-[#4c4c4c]">
        <span className="w-[162px]">2025/11/21</span>
        <span className="w-[162px] tracking-[0.3px]">周期数39个</span>
        <span>前复权</span>
        <span className="ml-auto">2026/01/16</span>
      </div>
    </div>
  );
}

function ChipHistogram() {
  return (
    <svg className="block h-[369px] w-[392px]" viewBox="808 786 392 369" fill="none">
      <path d="M808 787H1200M808 1154H1200" stroke="#bac5d2" strokeWidth="2.2" />
      <path d={stepPath(232, chipsHigh)} fill="#4272ba" />
      <path d="M819.500 914V985" stroke="#e9b9b6" strokeDasharray="1.5 2" />
      <path d="M818 912H1021" stroke="#bd3d38" strokeWidth="2.5" />
      <path d={stepPath(796, chipsLow)} fill="#bd3c36" />
      <path d="M818 1000H856" stroke="#f0a044" strokeWidth="1.8" />
      <AxisLabel x={1137} y={810} w={49}>9.04</AxisLabel>
      <AxisLabel x={1137} y={875} w={49}>7.86</AxisLabel>
      <AxisLabel x={1137} y={966} w={49}>6.69</AxisLabel>
      <AxisLabel x={1137} y={1057} w={49}>5.51</AxisLabel>
      <AxisLabel x={1137} y={1148} w={49}>4.34</AxisLabel>
    </svg>
  );
}

function ChipPanel() {
  return (
    <div className="w-[392px] text-[31.5px] leading-[42px] whitespace-nowrap text-[#4c4c4c] [-webkit-text-stroke:0.25px]">
      <div className="flex h-[64px] items-start pt-[11px]">
        <svg className="ml-[19px] h-[49px] w-[49px]" viewBox="0 0 49 49">
          <rect x="1" y="1" width="47" height="47" fill="#fff" stroke="#c2453f" strokeWidth="2.2" />
          <path d="M8 12.500H31" stroke="#6b8fd6" strokeWidth="6" />
          <path d="M8 25H41" stroke="#5883d3" strokeWidth="6.5" />
          <path d="M8 37.500H23" stroke="#dca150" strokeWidth="6" />
        </svg>
        <svg className="ml-[52px] h-[49px] w-[49px]" viewBox="0 0 49 49">
          <rect x="1" y="1" width="47" height="47" fill="#fff" stroke="#f2f2f2" strokeWidth="2" />
          <path d="M14 7L32 17L28 23L38 32L14 42Z" fill="#e0bd6c" />
          <path d="M14 17L24 19L20 24L27 34L14 37Z" fill="#c9593e" />
        </svg>
        <svg className="ml-[52px] h-[49px] w-[49px]" viewBox="0 0 49 49">
          <rect x="1" y="1" width="47" height="47" fill="#fff" stroke="#f2f2f2" strokeWidth="2" />
          <path d="M14 7L30 17L27 23L38 33L14 42Z" fill="#5883d8" />
          <path d="M14 17L24 19L19 25L27 34L14 37Z" fill="#4743cd" />
        </svg>
        <Cross className="mt-[9px] ml-[56px] h-[34px] w-[34px]" />
      </div>
      <ChipHistogram />
      <div className="mt-[117px] flex h-[40px] items-center pl-[126px] text-black [-webkit-text-stroke:0.8px]">
        筹码分布
        <svg className="ml-[22px] h-[38px] w-[22px]" viewBox="0 0 22 38" fill="none" stroke="#999" strokeWidth="3">
          <path d="M2 1L19 19L2 37" />
        </svg>
      </div>
      <div className="mt-[119px] flex h-[41px] items-center pl-[13px]">
        <span className="w-[141px] tracking-[0.4px]">获利比例:</span>
        <div className="mt-[8px] flex h-[35px] w-[192px] items-center justify-center bg-gradient-to-r from-[#bd3c36] from-[52%] to-[#4272ba] to-[52%] pr-[20px] pb-[4px] text-white [-webkit-text-stroke:0.6px]">
          52.0%
        </div>
      </div>
      <div className="pl-[11px]">
        7.66处获利盘:<span className="ml-[18px] text-[#b5433d] [-webkit-text-stroke:0.6px]">52.0%</span>
      </div>
      <div className="pl-[11px]">
        平均成本:<span className="ml-[21px] text-[#cf8a3c] [-webkit-text-stroke:0.6px]">6.31元</span>
      </div>
      <div className="mt-[4px] ml-[6px] flex h-[45px] text-center">
        <div className="flex w-[171px] items-center justify-center border-2 border-[#c0443e] pb-[4px] text-[#c0443e]">90%筹码</div>
        <div className="flex w-[170px] items-center justify-center border-2 border-l-0 border-[#4c4c4c] pb-[4px]">70%筹码</div>
      </div>
      <div className="-mt-px pl-[11px]">价格区间:<span className="ml-2 tracking-[0.4px]">5.18-8.66</span></div>
      <div className="pl-[11px]">集中度:<span className="ml-2 tracking-[0.4px]">39.15%</span></div>
    </div>
  );
}

/* ---------- footer ---------- */

function IndicatorBar() {
  return (
    <div className="flex h-[85px] items-center border-t-2 border-[#eeeeee] pt-[3px] text-[37.5px] leading-none whitespace-nowrap text-[#666]">
      <span className="ml-[51px]">主图</span>
      <svg className="mt-[8px] ml-[9px] h-[15px] w-[24px]" viewBox="0 0 24 15">
        <path d="M2 1H22L13 13Q12 14 11 13Z" fill="#999" stroke="#999" strokeLinejoin="round" />
      </svg>
      <i className="ml-[53px] h-[44px] w-px bg-[#e2e2e2]" />
      <span className="ml-[22px] w-[62px]">、</span>
      <span className="w-[202px]">黑牛均线</span>
      <span className="w-[203px]">绝佳买卖</span>
      <span className="w-[163px]">分时图</span>
      <span className="flex w-[160px] gap-[5px]">
        <b className="font-normal">裸</b>K<b className="font-normal">线</b>
      </span>
      <span className="text-[39px] tracking-[1.8px] text-[#c5483f]">BOLL-M</span>
    </div>
  );
}

const infoTabs = ['综评', '资讯', '资金', 'F10', '行业', '基金', '扭亏'];

function InfoTabs() {
  return (
    <div className="flex h-[80px] w-[1200px] overflow-hidden border-b-[3px] border-[#f0f0f0] text-[43px] leading-[115px] whitespace-nowrap text-black [-webkit-text-stroke:0.4px]">
      {infoTabs.map((t) => (
        <div key={t} className={clsx('w-[188px] shrink-0 text-center', t === '资金' && 'text-[#c9463e]', t === 'F10' && 'tracking-[1px]')}>
          {t}
        </div>
      ))}
    </div>
  );
}

function NavItem({ label, active, className, children }: { label: string; active?: boolean; className: string; children: ReactNode }) {
  return (
    <div className={clsx('flex flex-col items-center pt-[14px]', className)}>
      <svg className="h-[64px] w-[64px]" viewBox="0 0 64 64" fill="none">{children}</svg>
      <span className={clsx('mt-[10px] text-[35px] leading-[44px]', active ? 'text-[#c5443c] [-webkit-text-stroke:0.8px]' : 'text-[#666]')}>
        {label}
      </span>
    </div>
  );
}

function BottomNav() {
  return (
    <div className="relative flex h-[243px] whitespace-nowrap">
      <div className="flex w-[319px] flex-col items-center pt-[9px] text-[#489b2c]">
        <svg className="h-[12px] w-[20px]" viewBox="0 0 20 12">
          <path d="M10 0L19 9Q20 12 16 12H4Q0 12 1 9Z" fill="#999" />
        </svg>
        <div className="mt-[13px] text-[44px] leading-[52px] tracking-[-0.8px]">14281.08</div>
        <div className="mt-[4px] text-[36px] leading-[50px]">
          <span className="mr-[10px] text-[#666]">深证</span>
          <span className="text-[37px] tracking-[1.7px]">-0.18%</span>
        </div>
      </div>
      <NavItem label="交易" active className="w-[220px]">
        <defs>
          <linearGradient id="trade" x1="0" y1="0" x2="1" y2=".8">
            <stop offset="0" stopColor="#eea9a3" />
            <stop offset=".6" stopColor="#d8433c" />
            <stop offset="1" stopColor="#d5423a" />
          </linearGradient>
        </defs>
        <path d="M28 3Q32 1 36 3L55 14Q58 16 58 20V42Q58 45 55 47L36 59Q32 61 28 59L8 47Q6 45 6 42V20Q6 16 8 14Z" fill="url(#trade)" />
        <path d="M19 27H44L35 19M45 36H20L28 43" stroke="#fff" strokeWidth="4" />
      </NavItem>
      <NavItem label="预警" className="w-[222px]">
        <path d="M32 3.500Q34 3.500 34.500 6Q50 9 50 27Q50 39 54 44Q57 50 50 50H14Q7 50 10 44Q14 39 14 27Q14 9 29.500 6Q30 3.500 32 3.500Z" stroke="#333" strokeWidth="4" />
        <path d="M26 54H38Q37 60.500 32 60.500Q27 60.500 26 54Z" fill="#333" />
      </NavItem>
      <NavItem label="加自选" className="w-[219px]">
        <circle cx="32" cy="32" r="26.5" stroke="#c9423a" strokeWidth="4" />
        <path d="M32 17V47M17 32H47" stroke="#c9423a" strokeWidth="4.5" />
      </NavItem>
      <NavItem label="更多" className="w-[219px]">
        <g stroke="#333" strokeWidth="4.5">
          <rect x="7" y="7" width="20" height="20" rx="3" />
          <rect x="35" y="7" width="20" height="20" rx="3" />
          <rect x="7" y="35" width="20" height="20" rx="3" />
          <rect x="35" y="35" width="20" height="20" rx="3" />
        </g>
      </NavItem>
      <i className="absolute bottom-[30px] left-[399px] h-[14px] w-[400px] rounded-full bg-[#999]" />
    </div>
  );
}

export default function App() {
  return (
    <div className="h-[2652px] w-[1200px] overflow-hidden bg-white font-['Roboto','Noto_Sans_CJK_SC',sans-serif]">
      <header className="h-[276px] bg-[#d6433a]">
        <StatusBar />
        <TitleBar />
      </header>
      <Quote />
      <Notice />
      <PeriodTabs />
      <main className="flex">
        <Charts />
        <ChipPanel />
      </main>
      <IndicatorBar />
      <div className="h-[17px] bg-[#f3f3f3]" />
      <InfoTabs />
      <BottomNav />
    </div>
  );
}
